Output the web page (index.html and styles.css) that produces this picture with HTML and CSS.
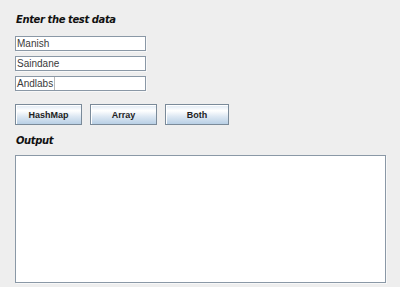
FILE: index.html
```html
<!DOCTYPE html>
<html>
<head>
<meta charset="utf-8">
<link rel="stylesheet" href="styles.css">
</head>
<body>
<div class="panel">
  <div class="label title">Enter the test data</div>
  <div class="fields">
    <div class="field"><span class="val">Manish</span></div>
    <div class="field"><span class="val">Saindane</span></div>
    <div class="field"><span class="val">Andlabs</span><span class="caret"></span></div>
  </div>
  <div class="buttons">
    <div class="btn w67">HashMap</div>
    <div class="btn w67">Array</div>
    <div class="btn w64">Both</div>
  </div>
  <div class="label output-label">Output</div>
  <div class="output"></div>
</div>
</body>
</html>
```
FILE: styles.css
```css
html, body {
  margin: 0;
  padding: 0;
  background: #eeeeee;
  width: 400px;
  height: 287px;
  overflow: hidden;
}
.panel {
  display: flex;
  flex-direction: column;
  align-items: flex-start;
  padding: 13px 0 0 15px;
}
.label {
  font-family: "DejaVu Sans", Verdana, sans-serif;
  font-weight: bold;
  font-style: italic;
  font-size: 10px;
  letter-spacing: -0.4px;
  line-height: 13px;
  color: #111111;
  padding-left: 1px;
}
.fields {
  display: flex;
  flex-direction: column;
  gap: 5px;
  margin-top: 10px;
}
.field {
  box-sizing: border-box;
  width: 131px;
  height: 15px;
  background: #ffffff;
  border: 1px solid #8a98a6;
  box-shadow: 1px 1px 0 #f8f8f8;
  display: flex;
  align-items: center;
  padding-left: 1px;
  font-family: "Liberation Sans", Arial, sans-serif;
  font-size: 10px;
  color: #3a3a3a;
}
.val { line-height: 13px; }
.caret {
  width: 1px;
  height: 13px;
  background: #b8b8b8;
  margin-left: 1px;
}
.buttons {
  display: flex;
  gap: 8px;
  margin-top: 13px;
}
.btn {
  box-sizing: border-box;
  height: 21px;
  border: 1px solid #7a8a99;
  box-shadow: inset 1px 1px 0 #ffffff;
  background: linear-gradient(to bottom, #dde8f3 0%, #ffffff 30%, #ffffff 30%, #dde8f3 60%, #b8cfe5 100%);
  display: flex;
  align-items: center;
  justify-content: center;
  font-family: "Liberation Sans", Arial, sans-serif;
  font-weight: bold;
  font-size: 9px;
  color: #222222;
}
.w67 { width: 67px; }
.w64 { width: 64px; }
.output-label {
  margin-top: 9px;
}
.output {
  box-sizing: border-box;
  margin-top: 8px;
  width: 371px;
  height: 128px;
  background: #ffffff;
  border: 1px solid #8a98a6;
  box-shadow: 1px 1px 0 #f8f8f8;
}
```
